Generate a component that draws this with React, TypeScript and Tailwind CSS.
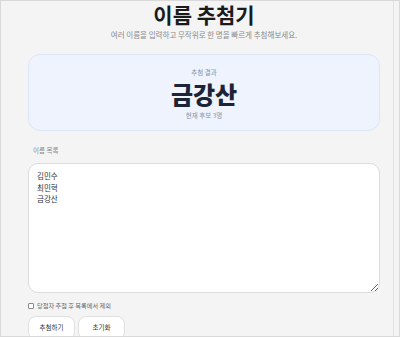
import { useState } from 'react'

const font = { fontFamily: '"Noto Sans CJK KR", "Noto Sans", sans-serif' }

export default function App() {
  const [names, setNames] = useState('김민수\n최민혁\n금강산')
  const [exclude, setExclude] = useState(false)
  const count = names.split('\n').filter((n) => n.trim()).length

  return (
    <div
      className="flex h-[337px] w-[400px] overflow-hidden border border-[#d9d9d9] bg-[#f4f4f4]"
      style={font}
    >
      <main className="flex flex-1 flex-col pl-[27px]">
        <div className="flex w-[352px] flex-col">
          {/* Header */}
          <h1 className="text-center text-[21px] font-bold leading-[26px] text-[#1b1b1b]">
            이름 추첨기
          </h1>
          <p className="mt-[3px] text-center text-[7.5px] leading-[10px] text-[#8a8a8a]">
            여러 이름을 입력하고 무작위로 한 명을 빠르게 추첨해보세요.
          </p>

          {/* Result card */}
          <section className="mt-[14px] flex h-[77px] flex-col items-center rounded-[12px] border border-[#dde6f6] bg-[#eef3fd] pt-[12px]">
            <span className="text-[6.5px] leading-[10px] text-[#8b93a3]">추첨 결과</span>
            <strong className="mt-[3px] text-[24px] font-extrabold leading-[27px] text-[#1c2537]">
              금강산
            </strong>
            <span className="mt-[3px] text-[6.5px] leading-[10px] text-[#8b93a3]">
              현재 후보 {count}명
            </span>
          </section>

          {/* Name list */}
          <label className="mt-[14px] pl-[5px] text-[6.5px] leading-[10px] text-[#888]">
            이름 목록
          </label>
          <textarea
            value={names}
            onChange={(e) => setNames(e.target.value)}
            spellCheck={false}
            className="mt-[8px] h-[130px] w-full resize rounded-[10px] border border-[#dcdcdc] bg-white px-[8px] pt-[6px] text-[7.5px] leading-[11.5px] text-[#333] outline-none"
          />

          <label className="mt-[8px] flex items-center gap-[3px] text-[6.2px] leading-[10px] text-[#666]">
            <input
              type="checkbox"
              checked={exclude}
              onChange={(e) => setExclude(e.target.checked)}
              className="h-[6px] w-[6px] appearance-none rounded-[1px] border border-[#8a8a8a] bg-white"
            />
            당첨자 추첨 후 목록에서 제외
          </label>

          <div className="mt-[5px] flex gap-[3px]">
            <button
              type="button"
              className="h-[24px] w-[47px] rounded-[8px] border border-[#e0e0e0] bg-white text-[6.5px] text-[#333]"
            >
              추첨하기
            </button>
            <button
              type="button"
              className="h-[24px] w-[47px] rounded-[8px] border border-[#e0e0e0] bg-white text-[6.5px] text-[#333]"
            >
              초기화
            </button>
          </div>
        </div>
      </main>
      <div className="w-[6px] border-l border-[#e2e2e2]" />
    </div>
  )
}
